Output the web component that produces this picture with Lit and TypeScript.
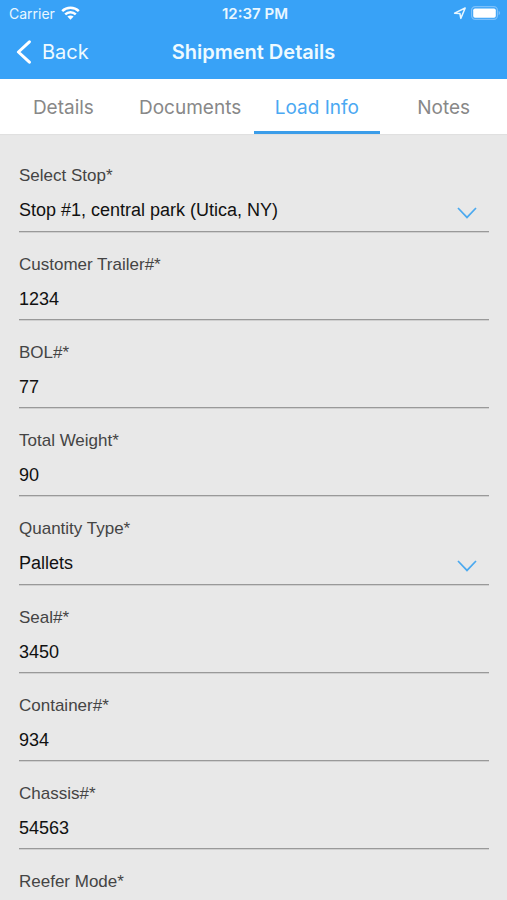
import { LitElement, html, css } from "lit";
import { customElement, property, state } from "lit/decorators.js";
import { classMap } from "lit/directives/class-map.js";

interface Field {
  id: string;
  label: string;
  value: string;
  kind: "text" | "select";
}

const FIELDS: Field[] = [
  { id: "stop", label: "Select Stop*", value: "Stop #1, central park (Utica, NY)", kind: "select" },
  { id: "trailer", label: "Customer Trailer#*", value: "1234", kind: "text" },
  { id: "bol", label: "BOL#*", value: "77", kind: "text" },
  { id: "weight", label: "Total Weight*", value: "90", kind: "text" },
  { id: "quantity", label: "Quantity Type*", value: "Pallets", kind: "select" },
  { id: "seal", label: "Seal#*", value: "3450", kind: "text" },
  { id: "container", label: "Container#*", value: "934", kind: "text" },
  { id: "chassis", label: "Chassis#*", value: "54563", kind: "text" },
  { id: "reefer", label: "Reefer Mode*", value: "", kind: "select" },
];

const TABS = ["Details", "Documents", "Load Info", "Notes"];

@customElement("status-bar")
export class StatusBar extends LitElement {
  static styles = css`
    :host {
      display: grid;
      grid-template-columns: 1fr auto 1fr;
      align-items: center;
      height: 26px;
      padding: 0 6px 0 9px;
      color: #e9f7ff;
      font-size: 14px;
      line-height: 20px;
    }
    .side {
      display: flex;
      align-items: center;
      gap: 6px;
    }
    .end {
      justify-content: flex-end;
      gap: 4px;
    }
    .text {
      padding-top: 2px;
    }
    .time {
      font-size: 15px;
      font-weight: 600;
    }
    svg {
      display: block;
    }
  `;

  render() {
    return html`
      <div class="side">
        <span class="text">Carrier</span>
        <svg width="19" height="14" viewBox="0 0 19 14" aria-label="Wi-Fi">
          <g fill="none" stroke="#fff" stroke-width="2.5">
            <path d="M1.2 5.1 C5.8 .6 13.2 .6 17.8 5.1" />
            <path d="M4.2 8.4 C7.2 5.5 11.8 5.5 14.8 8.4" />
          </g>
          <path d="M6.4 10.6 C8.2 9 10.8 9 12.6 10.6 L9.5 13.8 Z" fill="#fff" />
        </svg>
      </div>
      <span class="text time">12:37 PM</span>
      <div class="side end">
        <svg width="14" height="14" viewBox="0 0 14 14" aria-label="Location">
          <path d="M1.6 7.2 L12.2 2 L7.8 12.4 L6.9 7.5 Z" fill="none" stroke="#e9f7ff" stroke-width="1.5" stroke-linejoin="round" />
        </svg>
        <svg width="30" height="14" viewBox="0 0 30 14" aria-label="Battery">
          <rect x=".6" y=".6" width="25.8" height="12.8" rx="3.6" fill="none" stroke="#7cc0fa" stroke-width="1.2" />
          <rect x="2.2" y="2.4" width="22.6" height="9.4" rx="1.8" fill="#fff" />
          <path d="M27.6 4.8 C29.6 5.6 29.6 8.4 27.6 9.2 Z" fill="#7cc0fa" />
        </svg>
      </div>
    `;
  }
}

@customElement("form-field")
export class FormField extends LitElement {
  @property({ attribute: false }) field!: Field;

  static styles = css`
    :host {
      display: block;
    }
    .field {
      display: flex;
      flex-direction: column;
      border-bottom: 1px solid #999;
      box-shadow: 0 1px 0 #cfcfcf;
      padding-top: 23px;
    }
    label {
      color: #444;
      font-size: 17px;
      line-height: 20px;
    }
    .control {
      display: grid;
      grid-template-columns: 1fr 20px;
      align-items: center;
      box-sizing: border-box;
      height: 44px;
      padding: 3px 12px 0 0;
    }
    .select .control {
      height: 45px;
    }
    input,
    select {
      grid-area: 1 / 1 / 2 / 3;
      width: 100%;
      height: 32px;
      margin: 0;
      padding: 0;
      border: 0;
      border-radius: 0;
      outline: none;
      appearance: none;
      background: transparent;
      color: #111;
      font: inherit;
      font-size: 18px;
      line-height: 32px;
    }
    svg {
      grid-area: 1 / 2;
      pointer-events: none;
      margin-top: 6px;
    }
  `;

  render() {
    const { id, label, value, kind } = this.field;
    return html`
      <div class=${classMap({ field: true, select: kind === "select" })}>
        <label for=${id}>${label}</label>
        <div class="control">
          ${kind === "select"
            ? html`
                <select id=${id}>
                  <option>${value}</option>
                </select>
                <svg width="20" height="12" viewBox="0 0 20 12" aria-hidden="true">
                  <path d="M1 1 L10 10.4 L19 1" fill="none" stroke="#4ba9ef" stroke-width="1.7" />
                </svg>
              `
            : html`<input id=${id} type="text" .value=${value} />`}
        </div>
      </div>
    `;
  }
}

@customElement("app-root")
export class AppRoot extends LitElement {
  @state() private active = "Load Info";

  static styles = css`
    :host {
      display: flex;
      flex-direction: column;
      height: 100vh;
      overflow: hidden;
      background: #e8e8e8;
      font-family: Inter, "Liberation Sans", sans-serif;
    }
    header {
      background: #38a2f7;
      flex: none;
    }
    .nav {
      display: grid;
      grid-template-columns: 1fr auto 1fr;
      align-items: center;
      box-sizing: border-box;
      height: 53px;
      padding: 0 16px 2px;
      color: #eefaff;
      font-size: 20px;
      line-height: 24px;
    }
    .back {
      justify-self: start;
      display: flex;
      align-items: center;
      gap: 10px;
      padding: 0;
      border: 0;
      background: none;
      color: inherit;
      font: inherit;
      cursor: pointer;
    }
    h1 {
      margin: 0;
      font-size: 20px;
      font-weight: 600;
    }
    .tabs {
      flex: none;
      display: grid;
      grid-template-columns: repeat(4, 1fr);
      height: 55px;
      background: #fff;
      box-shadow: 0 1px 1px #e0e0e0;
    }
    .tab {
      padding: 5px 0 0;
      border: 0;
      border-bottom: 3px solid transparent;
      background: none;
      color: #888;
      font: inherit;
      font-size: 19px;
      line-height: 24px;
      cursor: pointer;
    }
    .tab.active {
      color: #4aa8f2;
      border-bottom-color: #3b9de9;
    }
    main {
      flex: 1;
      min-height: 0;
      overflow-y: auto;
      scrollbar-width: none;
      padding: 9px 18px 0 19px;
      font-family: "Liberation Sans", Arial, sans-serif;
    }
  `;

  render() {
    return html`
      <header>
        <status-bar></status-bar>
        <div class="nav">
          <button class="back" type="button">
            <svg width="16" height="24" viewBox="0 0 16 24" aria-hidden="true">
              <path d="M13.4 1.8 L2.4 12 L13.4 22.2" fill="none" stroke="#fff" stroke-width="3" stroke-linecap="round" stroke-linejoin="round" />
            </svg>
            Back
          </button>
          <h1>Shipment Details</h1>
        </div>
      </header>
      <nav class="tabs" role="tablist">
        ${TABS.map(
          (tab) => html`
            <button
              type="button"
              role="tab"
              aria-selected=${tab === this.active}
              class=${classMap({ tab: true, active: tab === this.active })}
              @click=${() => (this.active = tab)}
            >
              ${tab}
            </button>
          `,
        )}
      </nav>
      <main>${FIELDS.map((field) => html`<form-field .field=${field}></form-field>`)}</main>
    `;
  }
}
